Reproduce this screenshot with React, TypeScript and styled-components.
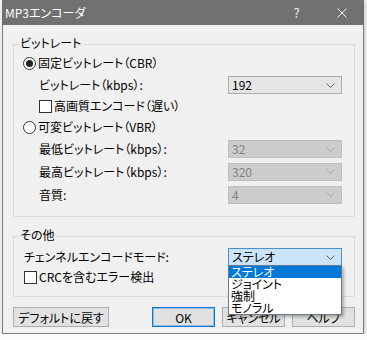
import React from 'react';
import styled, { createGlobalStyle } from 'styled-components';

type SelectVariant = 'normal' | 'disabled' | 'open';

const GlobalStyle = createGlobalStyle`
  html, body {
    margin: 0;
    padding: 0;
    background: #fbfbfb;
  }
  body {
    font-family: "Noto Sans CJK JP", "Noto Sans", sans-serif;
    font-size: 12px;
  }
`;

const Window = styled.div`
  margin-left: 2px;
  width: 362px;
  height: 334px;
  box-sizing: border-box;
  display: flex;
  flex-direction: column;
  background: #f0f0f0;
  border: 1px solid #7d7d7d;
  border-top: none;
  box-shadow: 1px 1px 5px rgba(0, 0, 0, 0.25);
  color: #000;
  font-feature-settings: 'palt';
`;

const TitleBar = styled.div`
  display: flex;
  align-items: center;
  height: 25px;
  margin: 0 -1px;
  padding-left: 3px;
  background: #717171;
  color: #fff;
`;

const TitleText = styled.div`
  flex: 1;
  line-height: 14px;
`;

const TitleButton = styled.div`
  width: 45px;
  height: 25px;
  display: flex;
  align-items: center;
  justify-content: center;
  font-size: 13px;
  color: #f2f2f2;
`;

const Group = styled.div<{ $pt: number; $pb: number; $pl: number }>`
  position: relative;
  margin: 19px 8px 0 10px;
  padding: ${(p) => p.$pt}px 12px ${(p) => p.$pb}px ${(p) => p.$pl}px;
  border: 1px solid #dcdcdc;
`;

const Legend = styled.div`
  position: absolute;
  top: -9px;
  left: 5px;
  padding: 0 1px;
  line-height: 14px;
  background: #f0f0f0;
`;

const Row = styled.div<{ $h: number; $indent?: number }>`
  display: flex;
  align-items: center;
  height: ${(p) => p.$h}px;
  padding-left: ${(p) => p.$indent || 0}px;
  line-height: 14px;
`;

const RowLabel = styled.div`
  flex: 1;
`;

const Radio = styled.span<{ $checked?: boolean }>`
  position: relative;
  width: 13px;
  height: 13px;
  box-sizing: border-box;
  margin-right: 2px;
  border: 1px solid #333;
  border-radius: 50%;
  background: #fff;
  &::after {
    content: '';
    display: ${(p) => (p.$checked ? 'block' : 'none')};
    position: absolute;
    left: 2px;
    top: 2px;
    width: 7px;
    height: 7px;
    border-radius: 50%;
    background: #222;
  }
`;

const Check = styled.span`
  width: 13px;
  height: 13px;
  box-sizing: border-box;
  margin-right: 2px;
  border: 1px solid #333;
  background: #fff;
`;

const selectColors = {
  normal: { bg: '#e5e5e5', border: '#adadad', text: '#000', arrow: '#606060' },
  disabled: { bg: '#cccccc', border: '#bfbfbf', text: '#838383', arrow: '#a6a6a6' },
  open: { bg: '#cce4f7', border: '#4a8fd0', text: '#000', arrow: '#606060' },
};

const SelectBox = styled.div<{ $variant: SelectVariant }>`
  position: relative;
  width: 114px;
  height: 18px;
  box-sizing: border-box;
  display: flex;
  align-items: center;
  justify-content: space-between;
  padding: 0 6px 0 3px;
  background: ${(p) => selectColors[p.$variant].bg};
  border: 1px solid ${(p) => selectColors[p.$variant].border};
  color: ${(p) => selectColors[p.$variant].text};
`;

const DropList = styled.div`
  position: absolute;
  top: 100%;
  left: -1px;
  z-index: 2;
  width: 114px;
  box-sizing: border-box;
  border: 1px solid #6b7a89;
  background: #fff;
  box-shadow: 2px 2px 3px rgba(0, 0, 0, 0.28);
`;

const DropItem = styled.div<{ $active?: boolean }>`
  height: 12px;
  line-height: 12px;
  padding-left: 2px;
  background: ${(p) => (p.$active ? '#0078d7' : 'transparent')};
  color: ${(p) => (p.$active ? '#fff' : '#000')};
`;

const ButtonRow = styled.div`
  display: flex;
  gap: 7px;
  margin-top: 10px;
  padding: 0 8px 0 10px;
`;

const Spacer = styled.div`
  flex: 1;
`;

const Button = styled.div<{ $w: number; $default?: boolean }>`
  width: ${(p) => p.$w}px;
  height: 20px;
  box-sizing: border-box;
  display: flex;
  align-items: center;
  justify-content: center;
  background: #e1e1e1;
  border: 1px solid ${(p) => (p.$default ? '#0078d7' : '#adadad')};
  box-shadow: ${(p) => (p.$default ? 'inset 0 0 0 1px rgba(0, 120, 215, 0.35)' : 'none')};
`;

const Chevron = ({ color }: { color: string }) => (
  <svg width="9" height="5" viewBox="0 0 9 5">
    <polyline points="0.5,0.5 4.5,4.5 8.5,0.5" fill="none" stroke={color} strokeWidth="1" />
  </svg>
);

const Select = ({
  value,
  variant = 'normal',
  children,
}: {
  value: string;
  variant?: SelectVariant;
  children?: React.ReactNode;
}) => (
  <SelectBox $variant={variant}>
    <span>{value}</span>
    <Chevron color={selectColors[variant].arrow} />
    {children}
  </SelectBox>
);

const modes = ['ステレオ', 'ジョイント', '強制', 'モノラル'];

export default function App() {
  return (
    <>
      <GlobalStyle />
      <Window>
        <TitleBar>
          <TitleText>MP3エンコーダ</TitleText>
          <TitleButton>?</TitleButton>
          <TitleButton>
            <svg width="10" height="10" viewBox="0 0 10 10">
              <path d="M0.5 0.5L9.5 9.5M9.5 0.5L0.5 9.5" stroke="#f2f2f2" strokeWidth="1" />
            </svg>
          </TitleButton>
        </TitleBar>

        <Group $pt={7} $pb={10} $pl={9}>
          <Legend>ビットレート</Legend>
          <Row $h={22}>
            <Radio $checked />
            <RowLabel>固定ビットレート（CBR）</RowLabel>
          </Row>
          <Row $h={22} $indent={16}>
            <RowLabel>ビットレート（kbps）:</RowLabel>
            <Select value="192" />
          </Row>
          <Row $h={20} $indent={16}>
            <Check />
            <RowLabel>高画質エンコード（遅い）</RowLabel>
          </Row>
          <Row $h={22}>
            <Radio />
            <RowLabel>可変ビットレート（VBR）</RowLabel>
          </Row>
          <Row $h={22} $indent={16}>
            <RowLabel>最低ビットレート（kbps）:</RowLabel>
            <Select value="32" variant="disabled" />
          </Row>
          <Row $h={23} $indent={16}>
            <RowLabel>最高ビットレート（kbps）:</RowLabel>
            <Select value="320" variant="disabled" />
          </Row>
          <Row $h={23} $indent={16}>
            <RowLabel>音質:</RowLabel>
            <Select value="4" variant="disabled" />
          </Row>
        </Group>

        <Group $pt={10} $pb={9} $pl={10}>
          <Legend>その他</Legend>
          <Row $h={20}>
            <RowLabel>チェンネルエンコードモード:</RowLabel>
            <Select value="ステレオ" variant="open">
              <DropList>
                {modes.map((m, i) => (
                  <DropItem key={m} $active={i === 0}>
                    {m}
                  </DropItem>
                ))}
              </DropList>
            </Select>
          </Row>
          <Row $h={20}>
            <Check />
            <RowLabel>CRCを含むエラー検出</RowLabel>
          </Row>
        </Group>

        <ButtonRow>
          <Button $w={96}>デフォルトに戻す</Button>
          <Spacer />
          <Button $w={63} $default>
            OK
          </Button>
          <Button $w={63}>キャンセル</Button>
          <Button $w={63}>ヘルプ</Button>
        </ButtonRow>
      </Window>
    </>
  );
}
